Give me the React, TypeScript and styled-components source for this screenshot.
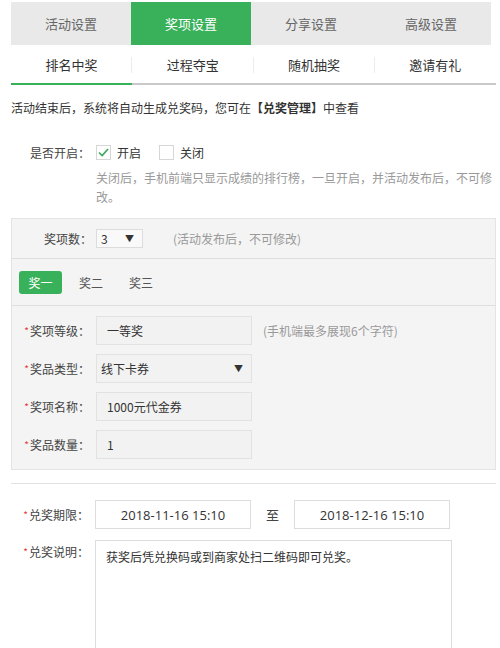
import React from "react";
import styled, { createGlobalStyle, css } from "styled-components";

const GlobalStyle = createGlobalStyle`
  html, body { margin: 0; padding: 0; background: #fff; }
  body {
    font-family: "Noto Sans CJK SC", "Microsoft YaHei", sans-serif;
    color: #333;
    font-size: 12px;
  }
  * { box-sizing: border-box; }
`;

const GREEN = "#39b15a";

const Page = styled.div`
  width: 500px;
  padding: 2px 4px 0 11px;
  overflow: hidden;
  height: 648px;
`;

const TopTabs = styled.div`
  display: flex;
  width: 480px;
  height: 43px;
  background: #e9e9e9;
`;

const TopTab = styled.div<{ $active?: boolean }>`
  flex: 1;
  display: flex;
  align-items: center;
  justify-content: center;
  font-size: 13px;
  color: #666;
  ${(p) =>
    p.$active &&
    css`
      background: ${GREEN};
      color: #fff;
    `}
`;

const SubTabs = styled.div`
  display: flex;
  width: 485px;
  height: 40px;
  border-bottom: 2px solid #c9c9c9;
`;

const SubTab = styled.div<{ $active?: boolean; $last?: boolean }>`
  flex: 1;
  position: relative;
  display: flex;
  align-items: center;
  justify-content: center;
  font-size: 13px;
  color: #333;
  margin-bottom: -2px;
  border-bottom: 2px solid ${(p) => (p.$active ? GREEN : "transparent")};
  &::after {
    content: "";
    display: ${(p) => (p.$last ? "none" : "block")};
    position: absolute;
    right: 0;
    top: 12px;
    height: 16px;
    width: 1px;
    background: #ececec;
  }
`;

const Notice = styled.div`
  margin-top: 14px;
  line-height: 18px;
  font-size: 12px;
  color: #333;
  b { font-weight: bold; }
`;

const SwitchRow = styled.div`
  display: flex;
  align-items: center;
  margin-top: 26px;
  padding-left: 19px;
  height: 18px;
  font-size: 12px;
  color: #444;
`;

const SwitchLabel = styled.span`
  width: 66px;
`;

const CheckItem = styled.span<{ $gap?: number }>`
  display: flex;
  align-items: center;
  gap: 6px;
  margin-left: ${(p) => p.$gap ?? 0}px;
  font-size: 12px;
  color: #333;
`;

const Box = styled.span`
  width: 15px;
  height: 15px;
  border: 1px solid #d6d6d6;
  background: #fff;
  display: flex;
  align-items: center;
  justify-content: center;
`;

const Helper = styled.div`
  margin-top: 7px;
  padding-left: 85px;
  font-size: 12px;
  line-height: 19px;
  color: #999;
`;

const Panel = styled.div`
  margin-top: 12px;
  width: 485px;
  background: #f4f4f4;
  border: 1px solid #e4e4e4;
`;

const CountRow = styled.div`
  height: 40px;
  display: flex;
  align-items: center;
  padding-left: 32px;
  border-bottom: 1px solid #dedede;
  font-size: 12px;
  color: #444;
`;

const MiniSelect = styled.div`
  width: 47px;
  height: 19px;
  margin-left: 4px;
  border: 1px solid #dcdcdc;
  background: #f9f9f9;
  display: flex;
  align-items: center;
  justify-content: space-between;
  padding: 0 8px 0 4px;
  font-size: 12px;
  color: #333;
`;

const Arrow = styled.span<{ $right?: number }>`
  font-size: 9px;
  color: #333;
  margin-right: ${(p) => p.$right ?? 0}px;
`;

const Hint = styled.span<{ $gap: number }>`
  margin-left: ${(p) => p.$gap}px;
  font-size: 12px;
  color: #999;
`;

const PrizeTabs = styled.div`
  height: 47px;
  display: flex;
  align-items: center;
  padding-left: 7px;
  gap: 17px;
  border-bottom: 1px solid #dedede;
`;

const PrizeTab = styled.div<{ $active?: boolean }>`
  height: 23px;
  padding: 0 ${(p) => (p.$active ? "9.5px" : "0")};
  border-radius: 3px;
  display: flex;
  align-items: center;
  font-size: 12px;
  color: ${(p) => (p.$active ? "#fff" : "#555")};
  background: ${(p) => (p.$active ? GREEN : "transparent")};
  margin-right: ${(p) => (p.$active ? "0" : "9px")};
`;

const FormBody = styled.div`
  padding: 10px 0 10px;
  display: flex;
  flex-direction: column;
  gap: 9px;
`;

const Row = styled.div`
  display: flex;
  align-items: center;
`;

const Label = styled.label<{ $width: number }>`
  width: ${(p) => p.$width}px;
  text-align: right;
  padding-right: 6px;
  font-size: 12px;
  color: #444;
  white-space: nowrap;
`;

const Star = styled.span`
  color: #e4393c;
  font-size: 10px;
  vertical-align: 1px;
  margin-right: 1px;
`;

const Field = styled.div<{ $width: number; $center?: boolean; $white?: boolean; $pad?: number }>`
  flex: none;
  width: ${(p) => p.$width}px;
  height: 29px;
  border: 1px solid ${(p) => (p.$white ? "#dddddd" : "#e2e2e2")};
  background: ${(p) => (p.$white ? "#fff" : "#f2f2f2")};
  display: flex;
  align-items: center;
  justify-content: ${(p) => (p.$center ? "center" : "space-between")};
  padding: 0 ${(p) => p.$pad ?? 10}px;
  font-size: 12px;
  color: #333;
`;

const DateText = styled.span`
  font-family: "Open Sans", "Noto Sans CJK SC", sans-serif;
  font-size: 13px;
  color: #333;
`;

const Divider = styled.div`
  margin-top: 13px;
  width: 485px;
  height: 1px;
  background: #e2e2e2;
`;

const DateRow = styled(Row)`
  margin-top: 16px;
`;

const To = styled.span`
  width: 43px;
  text-align: center;
  font-size: 13px;
  color: #444;
`;

const DescRow = styled.div`
  display: flex;
  align-items: flex-start;
  margin-top: 11px;
`;

const DescLabel = styled(Label)`
  padding-top: 3px;
`;

const TextArea = styled.div`
  width: 357px;
  height: 130px;
  border: 1px solid #dddddd;
  background: #fff;
  padding: 7px 10px;
  font-size: 12px;
  line-height: 18px;
  color: #333;
`;

const Check = () => (
  <svg width="13" height="13" viewBox="0 0 13 13">
    <path d="M2 6.5 L5.2 9.6 L11 3" fill="none" stroke="#3aa55a" strokeWidth="1.6" />
  </svg>
);

export default function App() {
  return (
    <>
      <GlobalStyle />
      <Page>
        <TopTabs>
          <TopTab>活动设置</TopTab>
          <TopTab $active>奖项设置</TopTab>
          <TopTab>分享设置</TopTab>
          <TopTab>高级设置</TopTab>
        </TopTabs>
        <SubTabs>
          <SubTab $active>排名中奖</SubTab>
          <SubTab>过程夺宝</SubTab>
          <SubTab>随机抽奖</SubTab>
          <SubTab $last>邀请有礼</SubTab>
        </SubTabs>

        <Notice>
          活动结束后，系统将自动生成兑奖码，您可在<b>【兑奖管理】</b>中查看
        </Notice>

        <SwitchRow>
          <SwitchLabel>是否开启：</SwitchLabel>
          <CheckItem>
            <Box>
              <Check />
            </Box>
            开启
          </CheckItem>
          <CheckItem $gap={18}>
            <Box />
            关闭
          </CheckItem>
        </SwitchRow>
        <Helper>
          关闭后，手机前端只显示成绩的排行榜，一旦开启，并活动发布后，不可修改。
        </Helper>

        <Panel>
          <CountRow>
            奖项数：
            <MiniSelect>
              3<Arrow>▼</Arrow>
            </MiniSelect>
            <Hint $gap={30}>(活动发布后，不可修改)</Hint>
          </CountRow>
          <PrizeTabs>
            <PrizeTab $active>奖一</PrizeTab>
            <PrizeTab>奖二</PrizeTab>
            <PrizeTab>奖三</PrizeTab>
          </PrizeTabs>
          <FormBody>
            <Row>
              <Label $width={84}>
                <Star>*</Star>奖项等级：
              </Label>
              <Field $width={156}>一等奖</Field>
              <Hint $gap={11}>(手机端最多展现6个字符)</Hint>
            </Row>
            <Row>
              <Label $width={84}>
                <Star>*</Star>奖品类型：
              </Label>
              <Field $width={156} $pad={4}>
                线下卡券<Arrow $right={4}>▼</Arrow>
              </Field>
            </Row>
            <Row>
              <Label $width={84}>
                <Star>*</Star>奖项名称：
              </Label>
              <Field $width={156}>1000元代金券</Field>
            </Row>
            <Row>
              <Label $width={84}>
                <Star>*</Star>奖品数量：
              </Label>
              <Field $width={156}>1</Field>
            </Row>
          </FormBody>
        </Panel>

        <Divider />

        <DateRow>
          <Label $width={84}>
            <Star>*</Star>兑奖期限：
          </Label>
          <Field $width={156} $white $center>
            <DateText>2018-11-16 15:10</DateText>
          </Field>
          <To>至</To>
          <Field $width={156} $white $center>
            <DateText>2018-12-16 15:10</DateText>
          </Field>
        </DateRow>
        <DescRow>
          <DescLabel $width={84}>
            <Star>*</Star>兑奖说明：
          </DescLabel>
          <TextArea>获奖后凭兑换码或到商家处扫二维码即可兑奖。</TextArea>
        </DescRow>
      </Page>
    </>
  );
}
